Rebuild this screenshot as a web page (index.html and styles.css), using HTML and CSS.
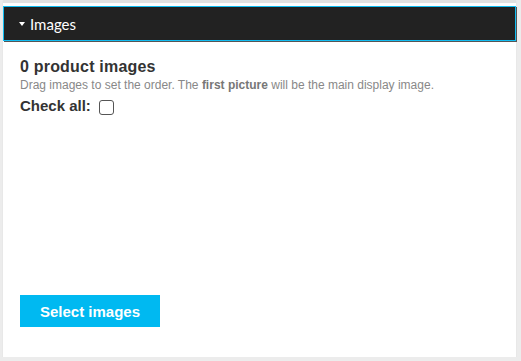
FILE: index.html
```html
<!DOCTYPE html>
<html lang="en">
<head>
  <meta charset="UTF-8">
  <title>Images</title>
  <link rel="stylesheet" href="styles.css">
</head>
<body>
  <div class="panel">
    <div class="panel-header">
      <span class="caret"></span>
      <span class="panel-title">Images</span>
    </div>
    <div class="panel-body">
      <h3 class="count">0 product images</h3>
      <p class="hint">Drag images to set the order. The <b>first picture</b> will be the main display image.</p>
      <label class="check-all">Check all: <span class="box"></span></label>
      <div class="image-list"></div>
      <button class="select-btn">Select images</button>
    </div>
  </div>
</body>
</html>
```

FILE: styles.css
```css
/* General styles */
body {
  margin: 0;
  padding: 0 5px 0 3px;
  background: #ececec;
  font-family: 'Liberation Sans', Arial, sans-serif;
  color: #333;
}

.panel {
  background: #fff;
  border-top: 3px solid #e2e2e2;
  height: 354px;
  box-shadow: 0 1px 1px #d4d4d4;
  display: flex;
  flex-direction: column;
}

.panel-header {
  margin-top: 3px;
  height: 33px;
  background: #222;
  border: 1px solid #12bdf2;
  box-shadow: 1px 1px 0 #555;
  display: flex;
  align-items: center;
  padding-left: 15px;
  gap: 5px;
}

.caret {
  width: 0;
  height: 0;
  border-left: 3.5px solid transparent;
  border-right: 3.5px solid transparent;
  border-top: 4px solid #fff;
}

.panel-title {
  font-family: Lato, sans-serif;
  font-size: 15px;
  color: #fff;
}

.panel-body {
  flex: 1;
  padding: 17px 17px 30px;
  display: flex;
  flex-direction: column;
}

.count {
  margin: 0;
  font-size: 16px;
  letter-spacing: 0.2px;
  font-weight: bold;
  line-height: 18px;
}

.hint {
  margin: 2px 0 0;
  font-size: 12px;
  line-height: 15px;
  color: #888;
}

.hint b {
  color: #777;
}

.check-all {
  margin-top: 3px;
  font-size: 15px;
  font-weight: bold;
  display: flex;
  align-items: center;
  gap: 8px;
}

.box {
  width: 13px;
  height: 13px;
  margin-top: 4px;
  border: 1px solid #555;
  border-radius: 3px;
}

.image-list {
  flex: 1;
}

.select-btn {
  align-self: flex-start;
  width: 140px;
  height: 32px;
  border: none;
  background: #00b9f1;
  color: #fff;
  font-family: 'Liberation Sans', Arial, sans-serif;
  font-size: 15px;
  font-weight: bold;
  cursor: pointer;
}
```
